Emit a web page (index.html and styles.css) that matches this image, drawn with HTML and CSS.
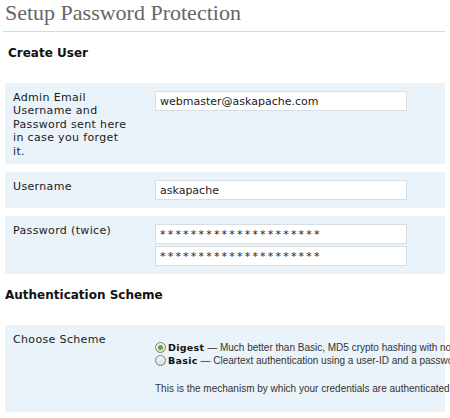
FILE: index.html
```html
<!DOCTYPE html>
<html>
<head>
<meta charset="utf-8">
<title>Setup Password Protection</title>
<link rel="stylesheet" href="styles.css">
</head>
<body>
<div class="wrap">
  <h2 class="title">Setup Password Protection</h2>

  <h3 class="section section-first">Create User</h3>

  <div class="row">
    <div class="label">Admin Email<br>Username and Password sent here in case you forget it.</div>
    <div class="field"><input class="text" type="text" value="webmaster@askapache.com"></div>
  </div>

  <div class="row">
    <div class="label">Username</div>
    <div class="field"><input class="text" type="text" value="askapache"></div>
  </div>

  <div class="row">
    <div class="label">Password (twice)</div>
    <div class="field field-stack">
      <input class="text pass" type="text" value="*********************">
      <input class="text pass" type="text" value="*********************">
    </div>
  </div>

  <h3 class="section">Authentication Scheme</h3>

  <div class="row">
    <div class="label">Choose Scheme</div>
    <div class="field field-scheme">
      <div class="choice"><span class="radio checked"></span><b>Digest</b><span class="desc">&nbsp;— Much better than Basic, MD5 crypto hashing with nonce</span></div>
      <div class="choice"><span class="radio"></span><b>Basic</b><span class="desc">&nbsp;— Cleartext authentication using a user-ID and a password</span></div>
      <p class="note">This is the mechanism by which your credentials are authenticated.</p>
    </div>
  </div>
</div>
</body>
</html>
```

FILE: styles.css
```css
html, body {
  margin: 0;
  padding: 0;
  background: #fff;
  overflow: hidden;
}

.wrap {
  width: 440px;
  margin-left: 5px;
  font-family: "DejaVu Sans", Verdana, sans-serif;
  color: #222;
}

.title {
  margin: 0 0 0 -2px;
  padding: 0 0 5px 2px;
  font-family: "Liberation Serif", Georgia, serif;
  font-weight: normal;
  font-size: 22px;
  line-height: 26px;
  color: #666;
  border-bottom: 1px solid #dadada;
}

.section {
  margin: 13px 0 22px 0;
  font-size: 12px;
  line-height: 16px;
  font-weight: bold;
  color: #111;
}

.section-first {
  padding-left: 3px;
}

.row {
  display: grid;
  grid-template-columns: 150px 1fr;
  background: #eaf3fa;
  margin-bottom: 8px;
}

.label {
  padding: 8px 21px 6px 8px;
  font-size: 11px;
  line-height: 13.4px;
  letter-spacing: 0.35px;
  color: #1a1a1a;
}

.field {
  padding: 8px 0 8px 0;
}

.field-stack {
  display: flex;
  flex-direction: column;
  gap: 2px;
}

.text {
  display: block;
  box-sizing: border-box;
  width: 252px;
  height: 20px;
  margin: 0;
  padding: 0 4px;
  border: 1px solid #d6dee6;
  background: #fff;
  font-family: "DejaVu Sans", Verdana, sans-serif;
  font-size: 11px;
  color: #222;
  outline: none;
}

.pass {
  letter-spacing: 2.2px;
}

.field-scheme {
  padding: 16px 0 17px 0;
  white-space: nowrap;
}

.choice {
  display: flex;
  align-items: center;
  height: 13px;
  line-height: 13px;
}

.choice b {
  font-size: 9.5px;
  letter-spacing: 0.3px;
  color: #111;
}

.radio {
  position: relative;
  box-sizing: border-box;
  width: 11px;
  height: 11px;
  margin-right: 2px;
  border: 1px solid #7d7d7d;
  border-radius: 50%;
  background: linear-gradient(#f4f4f4, #dcdcdc);
  flex: none;
}

.radio.checked::after {
  content: "";
  position: absolute;
  left: 2px;
  top: 2px;
  width: 5px;
  height: 5px;
  border-radius: 50%;
  background: #4fae3c;
}

.desc {
  font-family: "Liberation Sans", Arial, sans-serif;
  font-size: 10px;
  color: #333;
}

.note {
  margin: 15px 0 0 0;
  font-family: "Liberation Sans", Arial, sans-serif;
  font-size: 10px;
  line-height: 13px;
  color: #333;
}
```
